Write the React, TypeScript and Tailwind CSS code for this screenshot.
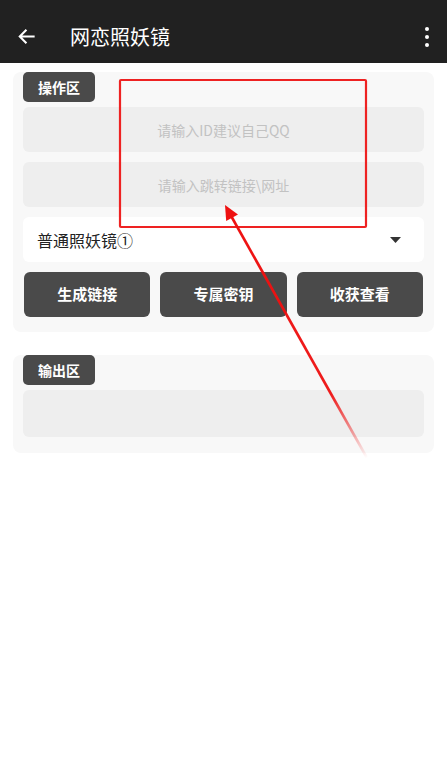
import React from 'react';

const font = { fontFamily: '"Noto Sans CJK SC", "Noto Sans", sans-serif' };

function Header() {
  return (
    <div className="h-[63px] bg-[#212121] flex items-center pt-[10px] text-white">
      <svg className="ml-[17px]" width="19" height="19" viewBox="0 0 24 24" fill="none" stroke="white" strokeWidth="2.6" strokeLinecap="square">
        <path d="M21 12H4M11 4.5L3.5 12L11 19.5" />
      </svg>
      <span className="ml-[34px] text-[20px] leading-none">网恋照妖镜</span>
      <div className="ml-auto mr-[18px] flex flex-col gap-[4px]">
        <span className="w-[4px] h-[4px] rounded-full bg-white" />
        <span className="w-[4px] h-[4px] rounded-full bg-white" />
        <span className="w-[4px] h-[4px] rounded-full bg-white" />
      </div>
    </div>
  );
}

function Badge({ text }: { text: string }) {
  return (
    <div className="-mt-[8px] w-[72px] h-[30px] rounded-[5px] bg-[#4a4a4a] text-white font-bold text-[14px] flex items-center justify-center">
      {text}
    </div>
  );
}

function Field({ placeholder }: { placeholder: string }) {
  return (
    <input
      readOnly
      placeholder={placeholder}
      className="w-full h-[45px] rounded-[6px] bg-[#eeeeee] text-center text-[14px] outline-none placeholder:text-[#c2c2c2]"
      style={font}
    />
  );
}

function ActionButton({ text }: { text: string }) {
  return (
    <button className="flex-1 h-[45px] rounded-[6px] bg-[#4a4a4a] text-white font-bold text-[15px] flex items-center justify-center">
      {text}
    </button>
  );
}

export default function App() {
  return (
    <div className="relative w-[447px] h-[778px] bg-white overflow-hidden" style={font}>
      <Header />

      <div className="px-[13px]">
        {/* 操作区 */}
        <div className="mt-[17px] rounded-[8px] bg-[#f8f8f8] px-[10px] pb-[15px]">
          <Badge text="操作区" />
          <div className="mt-[5px] flex flex-col gap-[10px]">
            <Field placeholder="请输入ID建议自己QQ" />
            <Field placeholder="请输入跳转链接\网址" />
            <div className="h-[45px] rounded-[6px] bg-white flex items-center pl-[14px] pr-[23px]">
              <span className="text-[16px] text-[#222222]">普通照妖镜①</span>
              <svg className="ml-auto" width="11" height="6" viewBox="0 0 11 6">
                <path d="M0 0H11L5.5 6Z" fill="#333333" />
              </svg>
            </div>
            <div className="flex gap-[10px] px-[1px]">
              <ActionButton text="生成链接" />
              <ActionButton text="专属密钥" />
              <ActionButton text="收获查看" />
            </div>
          </div>
        </div>

        {/* 输出区 */}
        <div className="mt-[31px] rounded-[8px] bg-[#f8f8f8] px-[10px] pb-[16px]">
          <Badge text="输出区" />
          <div className="mt-[5px] h-[47px] rounded-[6px] bg-[#eeeeee]" />
        </div>
      </div>

      {/* red annotation */}
      <svg className="absolute inset-0 pointer-events-none" width="447" height="778">
        <defs>
          <linearGradient id="fade" gradientUnits="userSpaceOnUse" x1="225" y1="205" x2="367" y2="458">
            <stop offset="0" stopColor="#ee1111" stopOpacity="1" />
            <stop offset="0.75" stopColor="#ee1111" stopOpacity="0.95" />
            <stop offset="1" stopColor="#ee1111" stopOpacity="0" />
          </linearGradient>
        </defs>
        <rect x="120" y="80" width="246" height="147" rx="1" fill="none" stroke="#ee2222" strokeWidth="2.2" />
        <path d="M230 214L367 458" stroke="url(#fade)" strokeWidth="2.6" />
        <path d="M225 205L226.2 221L238 214.4Z" fill="#ee1111" />
      </svg>
    </div>
  );
}
